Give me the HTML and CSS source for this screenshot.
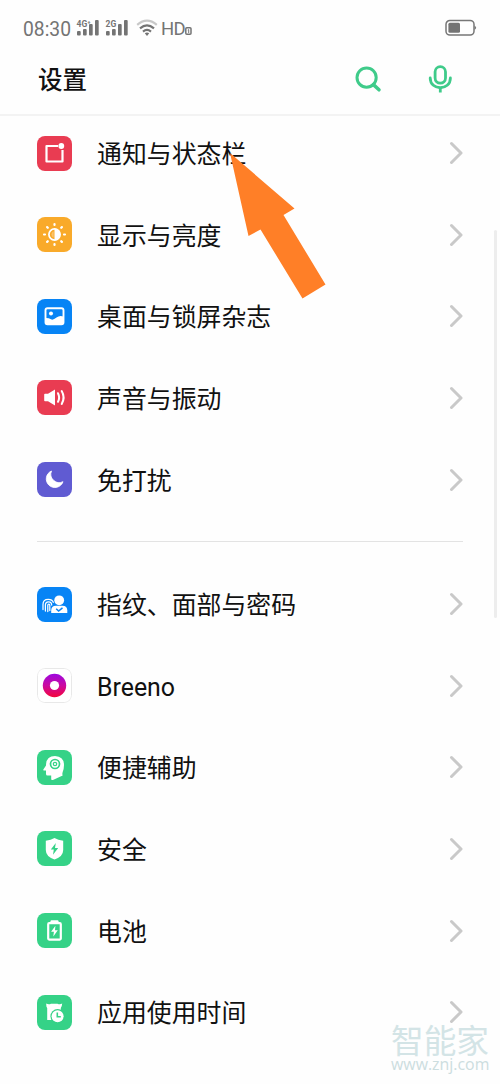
FILE: index.html
```html
<!DOCTYPE html>
<html lang="zh-CN">
<head>
<meta charset="utf-8">
<title>设置</title>
<link rel="stylesheet" href="styles.css">
</head>
<body>
<div class="screen">
  <div class="status">
    <span class="clock">08:30</span>
    <svg class="signal" width="24" height="18" viewBox="0 0 24 18"><g fill="#747474"><rect x="1" y="12" width="3.7" height="4.5" rx="1"/><rect x="7" y="10" width="3.7" height="6.5" rx="1"/><rect x="13" y="5" width="3.7" height="11.5" rx="1"/><rect x="19" y="1" width="3.7" height="15.5" rx="1"/></g><text x="0.5" y="7.5" class="net">4G⁺</text></svg>
    <svg class="signal second" width="24" height="18" viewBox="0 0 24 18"><g fill="#747474"><rect x="1" y="12" width="3.7" height="4.5" rx="1"/><rect x="7" y="10" width="3.7" height="6.5" rx="1"/><rect x="13" y="5" width="3.7" height="11.5" rx="1"/><rect x="19" y="1" width="3.7" height="15.5" rx="1"/></g><text x="0.5" y="7.5" class="net">2G</text></svg>
    <svg class="wifi" width="22" height="18" viewBox="0 0 22 18" fill="none" stroke-width="2.2"><path d="M1.2 5.8Q11-2.4 20.8 5.8" stroke="#c8c8c8"/><path d="M4 9.3Q11 3.3 18 9.3M7 12.6Q11 9.2 15 12.6" stroke="#747474"/><path d="M8.8 14.3Q11 12.8 13.2 14.3L11 17Z" fill="#747474"/></svg>
    <span class="hd">HD</span>
    <svg class="sim" width="7" height="8" viewBox="0 0 7 8"><rect x=".8" y=".8" width="5.2" height="6.4" rx="1" fill="none" stroke="#747474" stroke-width="1.5"/><path d="M2.8 3L3.7 2.6V6" fill="none" stroke="#747474"/></svg>
    <svg class="battery" width="32" height="18" viewBox="0 0 32 18"><rect x="1" y="1.5" width="28" height="14.5" rx="3.8" fill="none" stroke="#777" stroke-width="1.5"/><rect x="3.4" y="3.8" width="11.6" height="10" rx="1.5" fill="#747474"/><path d="M29.5 6.5Q32.8 8.8 29.5 11Z" fill="#777"/></svg>
  </div>
  <header class="header">
    <h1>设置</h1>
    <svg class="search" width="28" height="28" viewBox="0 0 28 28" fill="none" stroke="#3fcb8a" stroke-linecap="round"><circle cx="12.6" cy="12.6" r="9.6" stroke-width="3"/><path d="M19.4 19.6L25 24.8" stroke-width="3.5"/></svg>
    <svg class="mic" width="24" height="28" viewBox="0 0 24 28" fill="none" stroke="#3fcb8a" stroke-width="2.8"><rect x="7.1" y="1.6" width="10.4" height="16.6" rx="5.2"/><path d="M2.2 13C2.2 26 22.4 26 22.4 13" stroke-linecap="round"/><path d="M12.3 22.5V27.5"/></svg>
  </header>
  <main class="list">
    <div class="row"><svg class="icon red" viewBox="0 0 35 35"><path d="M21 10H9.5V25.5H25.5V14" fill="none" stroke="#fff" stroke-width="2.2" stroke-linejoin="round"/><circle cx="24.3" cy="10" r="2.9" fill="#fff"/></svg><span class="label">通知与状态栏</span><svg class="chev" viewBox="0 0 14 24"><path d="M2.5 2.5L12 12L2.5 21.5"/></svg></div>
    <div class="row"><svg class="icon amber" viewBox="0 0 35 35"><g stroke="#fff" stroke-width="2.2" stroke-linecap="round"><path d="M17.5 7V8M17.5 27V28M7 17.5H8M27 17.5H28M10.1 10.1L10.8 10.8M24.2 24.2L24.9 24.9M10.1 24.9L10.8 24.2M24.2 10.8L24.9 10.1"/><circle cx="17.5" cy="17.5" r="5.6" fill="none" stroke-width="1.7"/></g><path d="M17.5 11.5A6 6 0 0 1 17.5 23.5Z" fill="#fff"/><path d="M16.7 14.3A3.4 3.4 0 0 0 16.7 20.7Z" fill="#fff" opacity=".3"/></svg><span class="label">显示与亮度</span><svg class="chev" viewBox="0 0 14 24"><path d="M2.5 2.5L12 12L2.5 21.5"/></svg></div>
    <div class="row"><svg class="icon blue" viewBox="0 0 35 35"><rect x="8.5" y="9.2" width="18" height="16" rx="2" fill="none" stroke="#fff" stroke-width="1.9"/><circle cx="14" cy="14.4" r="2" fill="#fff"/><path d="M9 19Q12 19 14 20.3Q16 21.5 19.5 18.5Q22.5 16 26.5 17.5V25H9Z" fill="#fff"/></svg><span class="label">桌面与锁屏杂志</span><svg class="chev" viewBox="0 0 14 24"><path d="M2.5 2.5L12 12L2.5 21.5"/></svg></div>
    <div class="row"><svg class="icon red" viewBox="0 0 35 35"><path d="M8 13.8H11L18 9.6V25.4L11 21.3H8Q7.2 21.3 7.2 20.5V14.6Q7.2 13.8 8 13.8Z" fill="#fff"/><path d="M21 13.2Q23.2 17.5 21 21.8M24.7 11Q28.5 17.5 24.7 24" fill="none" stroke="#fff" stroke-width="2" stroke-linecap="round"/></svg><span class="label">声音与振动</span><svg class="chev" viewBox="0 0 14 24"><path d="M2.5 2.5L12 12L2.5 21.5"/></svg></div>
    <div class="row"><svg class="icon violet" viewBox="0 0 35 35"><path d="M14.5 9A8.6 8.6 0 1 0 26 19.7A8.4 8.4 0 0 1 14.5 9Z" fill="#fff" stroke="#fff" stroke-width=".8" stroke-linejoin="round"/></svg><span class="label">免打扰</span><svg class="chev" viewBox="0 0 14 24"><path d="M2.5 2.5L12 12L2.5 21.5"/></svg></div>
    <hr class="divider">
    <div class="row"><svg class="icon blue" viewBox="0 0 35 35"><g fill="none" stroke="#fff" stroke-width="1.25" stroke-linecap="round"><path d="M6 22.5V17.5Q6 12.3 11.3 12.3Q15.3 12.3 16.3 15.3"/><path d="M8.4 24V18Q8.4 14.8 11.6 14.8Q14.7 14.8 14.7 18"/><path d="M10.8 24.5V18.2Q10.8 17 11.8 17Q12.8 17 12.8 18.2V23.5"/></g><circle cx="22.2" cy="13.3" r="4.9" fill="#fff"/><path d="M14.2 26V23.5Q14.2 18.8 19 18.8H25.5Q30.3 18.8 30.3 23.5V26Z" fill="#fff"/><path d="M19.2 21.8L21.6 24L25.5 20.8" fill="none" stroke="#0784f5" stroke-width="1.5"/></svg><span class="label">指纹、面部与密码</span><svg class="chev" viewBox="0 0 14 24"><path d="M2.5 2.5L12 12L2.5 21.5"/></svg></div>
    <div class="row"><svg class="icon white" viewBox="0 0 35 35"><defs><linearGradient id="ring" x1="0" y1="0" x2="0" y2="1"><stop offset="0" stop-color="#9d08df"/><stop offset=".5" stop-color="#cb0aa0"/><stop offset="1" stop-color="#f4053b"/></linearGradient></defs><rect x=".5" y=".5" width="34" height="34" rx="7" fill="#fff" stroke="#e8e8e8"/><circle cx="17.5" cy="17.5" r="11.7" fill="url(#ring)"/><circle cx="17.5" cy="17.5" r="4.6" fill="#fff"/></svg><span class="label">Breeno</span><svg class="chev" viewBox="0 0 14 24"><path d="M2.5 2.5L12 12L2.5 21.5"/></svg></div>
    <div class="row"><svg class="icon green" viewBox="0 0 35 35"><path d="M14.2 29.3V25.5H10.5Q9 25.5 9 24V20.5H6.7Q6 20.2 6.5 19.3L9 15.6Q9 6 18 6Q27 6.6 27 15Q27 18.5 25.7 22Q25 24 25.7 25.5L16.5 29.7Q14.2 30.5 14.2 29.3Z" fill="#fff"/><circle cx="18" cy="14" r="4.5" fill="none" stroke="#35d287" stroke-width="1.7"/><circle cx="18" cy="14" r="1.7" fill="none" stroke="#35d287" stroke-width="1.2"/></svg><span class="label">便捷辅助</span><svg class="chev" viewBox="0 0 14 24"><path d="M2.5 2.5L12 12L2.5 21.5"/></svg></div>
    <div class="row"><svg class="icon green" viewBox="0 0 35 35"><path d="M17.5 7Q21 9.2 26.2 9.8V19Q26.2 25.5 17.5 28.5Q8.8 25.5 8.8 19V9.8Q14 9.2 17.5 7Z" fill="#fff"/><path d="M18.8 12L13.8 18.5H16.8L16 23.7L21.2 17H18Z" fill="#35d287"/></svg><span class="label">安全</span><svg class="chev" viewBox="0 0 14 24"><path d="M2.5 2.5L12 12L2.5 21.5"/></svg></div>
    <div class="row"><svg class="icon green" viewBox="0 0 35 35"><rect x="11.2" y="10.2" width="12.6" height="16.4" rx="1" fill="none" stroke="#fff" stroke-width="2.2"/><path d="M13.5 9.5V8.2Q13.5 7.2 14.5 7.2H20.5Q21.5 7.2 21.5 8.2V9.5Z" fill="#fff"/><path d="M18.4 12.7L14.1 18.7H16.9L16.3 23.5L20.8 17.3H18Z" fill="#fff"/></svg><span class="label">电池</span><svg class="chev" viewBox="0 0 14 24"><path d="M2.5 2.5L12 12L2.5 21.5"/></svg></div>
    <div class="row"><svg class="icon green" viewBox="0 0 35 35"><path d="M9.3 8.5Q11.5 10 14 8.8H20.5Q23 10 25.2 8.5Q25 11.5 23.8 13V18H17L14.5 25H10.2V13Q9 11.5 9.3 8.5Z" fill="#fff"/><circle cx="20.6" cy="21.3" r="7.2" fill="#35d287"/><circle cx="20.6" cy="21.3" r="6" fill="#fff"/><path d="M20.3 17.6V21.7H23.8" fill="none" stroke="#35d287" stroke-width="1.6"/></svg><span class="label">应用使用时间</span><svg class="chev" viewBox="0 0 14 24"><path d="M2.5 2.5L12 12L2.5 21.5"/></svg></div>
  </main>
  <svg class="pointer" width="96" height="148" viewBox="0 0 96 148"><path d="M0 0L64.5 55.5L53.5 62L95.5 131.5L72.5 145.5L30.5 76.5L18.5 83Z" fill="#ff7f27"/></svg>
  <div class="scrollbar"></div>
  <div class="watermark"><span class="brand">智能家</span><span class="site">www.znj.com</span></div>
</div>
</body>
</html>
```
FILE: styles.css
```css
* { box-sizing: border-box; }
body { margin: 0; background: #fefefe; }
.screen {
  position: relative;
  width: 500px;
  height: 1084px;
  overflow: hidden;
  background: #fefefe;
  color: #111;
  font-family: Roboto, "Noto Sans CJK SC", sans-serif;
}
.status {
  display: flex;
  align-items: center;
  height: 56px;
  padding: 0 23px 0 23px;
  color: #747474;
}
.clock { width: 53px; font-size: 19.3px; line-height: 24px; padding-top: 3px; }
.signal { margin-top: 0; }
.second { margin-left: 5px; }
.net { font: 700 8.5px Roboto, sans-serif; fill: #747474; }
.wifi { margin-left: 7px; }
.hd { margin-left: 3px; font-size: 18.5px; letter-spacing: -.8px; padding-top: 2px; width: 24px; }
.sim { margin-top: 6px; }
.battery { margin-left: auto; }
.header {
  display: flex;
  align-items: center;
  height: 60px;
  padding: 0 48px 13px 38px;
  border-bottom: 2px solid #f3f3f3;
}
.header h1 {
  margin: 0;
  padding-top: 4px;
  flex: 1;
  font-size: 24.5px;
  line-height: 36px;
  font-weight: 500;
}
.search { margin-right: 46px; }
.list { margin-top: -3.6px; padding: 0 37px; }
.row { display: flex; align-items: center; height: 81.6px; }
.icon { width: 35px; height: 35px; border-radius: 8px; flex: none; }
.red { background: #e93c52; }
.amber { background: #f9aa2a; }
.blue { background: #0784f5; }
.violet { background: #605bd2; }
.green { background: #35d287; }
.label { flex: 1; margin-left: 25px; padding-top: 4px; font-size: 24.9px; line-height: 36px; white-space: nowrap; }
.chev { width: 14px; height: 24px; fill: none; stroke: #c9c9c9; stroke-width: 3; stroke-linecap: round; stroke-linejoin: round; }
.divider { height: 1px; margin: 20.6px 0 21.4px; border: 0; background: #e3e3e3; }
.pointer { position: absolute; left: 230px; top: 153px; }
.scrollbar { position: absolute; left: 494px; top: 230px; width: 3px; height: 388px; border-radius: 2px; background: #ededed; }
.watermark {
  position: absolute;
  left: 391px;
  top: 1022px;
  display: flex;
  flex-direction: column;
  color: #d3e4e6;
}
.brand { font: 400 32.7px/33px "Noto Sans CJK SC", sans-serif; }
.site { font: 15.9px/19px "Open Sans", sans-serif; color: #ccdddf; }
```
